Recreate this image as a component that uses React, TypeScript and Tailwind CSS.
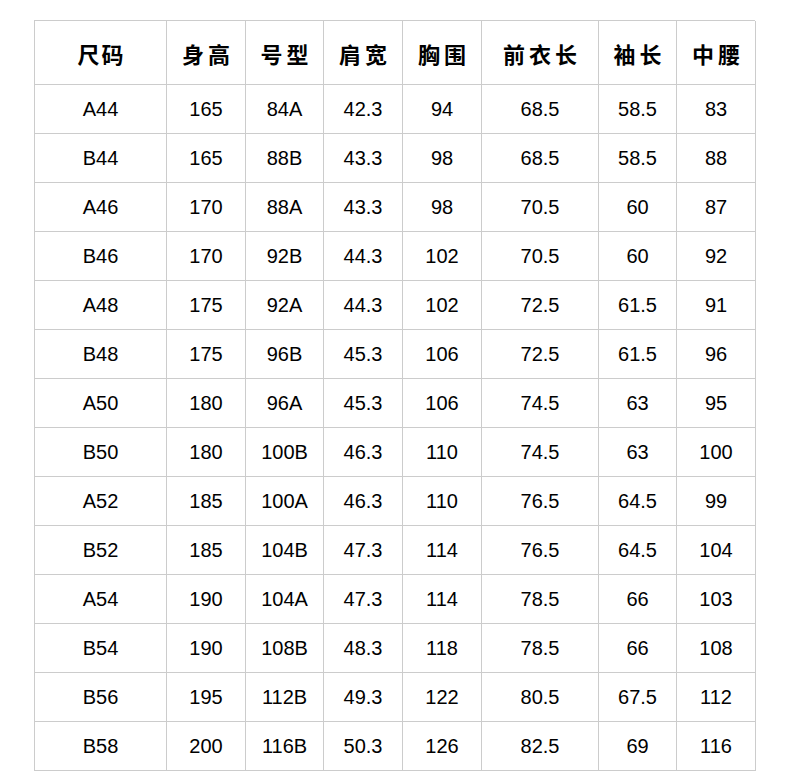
import React from "react";

const headers: { t: string; ls: string; mr: string }[] = [
  { t: "尺码", ls: "tracking-[2px]", mr: "-2px" },
  { t: "身高", ls: "tracking-[4px]", mr: "-4px" },
  { t: "号型", ls: "tracking-[4px]", mr: "-4px" },
  { t: "肩宽", ls: "tracking-[4px]", mr: "-4px" },
  { t: "胸围", ls: "tracking-[4px]", mr: "-4px" },
  { t: "前衣长", ls: "tracking-[4px]", mr: "-4px" },
  { t: "袖长", ls: "tracking-[4px]", mr: "-4px" },
  { t: "中腰", ls: "tracking-[4px]", mr: "-4px" },
];

const rows: string[][] = [
  ["A44", "165", "84A", "42.3", "94", "68.5", "58.5", "83"],
  ["B44", "165", "88B", "43.3", "98", "68.5", "58.5", "88"],
  ["A46", "170", "88A", "43.3", "98", "70.5", "60", "87"],
  ["B46", "170", "92B", "44.3", "102", "70.5", "60", "92"],
  ["A48", "175", "92A", "44.3", "102", "72.5", "61.5", "91"],
  ["B48", "175", "96B", "45.3", "106", "72.5", "61.5", "96"],
  ["A50", "180", "96A", "45.3", "106", "74.5", "63", "95"],
  ["B50", "180", "100B", "46.3", "110", "74.5", "63", "100"],
  ["A52", "185", "100A", "46.3", "110", "76.5", "64.5", "99"],
  ["B52", "185", "104B", "47.3", "114", "76.5", "64.5", "104"],
  ["A54", "190", "104A", "47.3", "114", "78.5", "66", "103"],
  ["B54", "190", "108B", "48.3", "118", "78.5", "66", "108"],
  ["B56", "195", "112B", "49.3", "122", "80.5", "67.5", "112"],
  ["B58", "200", "116B", "50.3", "126", "82.5", "69", "116"],
];

export default function App() {
  return (
    <div className="w-[790px] h-[771px] bg-white overflow-hidden pt-[20px] pl-[34px]">
      <div className="grid grid-cols-[132px_79px_78px_79px_79px_117px_78px_79px] w-[721px] border-l border-t border-[#cccccc] text-black">
        {headers.map((h, i) => (
          <div
            key={"h" + i}
            className="h-[64px] border-r border-b border-[#cccccc] flex items-center justify-center pt-[1px]"
          >
            <span
              className={`text-[22px] font-bold leading-none ${h.ls}`}
              style={{ fontFamily: '"Noto Sans CJK SC", "Noto Sans", sans-serif', marginRight: h.mr }}
            >
              {h.t}
            </span>
          </div>
        ))}
        {rows.map((r, ri) =>
          r.map((c, ci) => (
            <div
              key={ri + "-" + ci}
              className="h-[49px] border-r border-b border-[#cccccc] flex items-center justify-center text-[20px] leading-none"
              style={{ fontFamily: '"Liberation Sans", Arial, sans-serif' }}
            >
              {c}
            </div>
          ))
        )}
      </div>
    </div>
  );
}
